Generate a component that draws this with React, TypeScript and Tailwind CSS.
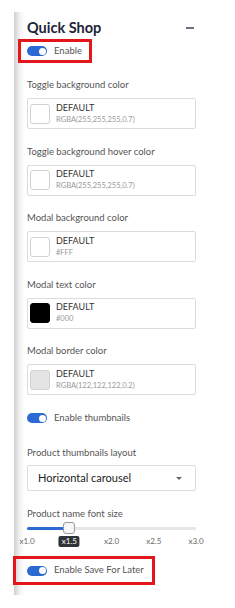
import React from 'react';

interface ColorFieldProps {
  label: string;
  value: string;
  swatch: string;
}

const Toggle: React.FC = () => (
  <span className="relative inline-block w-[20px] h-[10px] rounded-full bg-[#2c6ad3] shrink-0">
    <span className="absolute right-[1.5px] top-[1.5px] w-[7px] h-[7px] rounded-full bg-white"></span>
  </span>
);

const ColorField: React.FC<ColorFieldProps> = ({ label, value, swatch }) => (
  <div className="flex flex-col">
    <p className="text-[9.5px] leading-[14px] text-[#555] mb-[6px]">{label}</p>
    <div className="h-[31px] border border-[#dcdcdc] rounded-[2px] flex items-center pl-[2px] gap-[6px]">
      <span className={`w-[20px] h-[20px] rounded-[3px] border border-[#d2d2d2] ${swatch}`}></span>
      <div className="flex flex-col">
        <span className="text-[9px] leading-[12px] text-[#333]">DEFAULT</span>
        <span className="text-[7.5px] leading-[12px] text-[#999]">{value}</span>
      </div>
    </div>
  </div>
);

const App: React.FC = () => {
  const ticks = ['x1.0', 'x1.5', 'x2.0', 'x2.5', 'x3.0'];

  return (
    <div className="w-[235px] h-[608px] bg-white pl-[14px] pt-[12px] font-['Lato',sans-serif]">
      <div className="h-[583px] bg-[linear-gradient(to_right,#cfcfcf,#f4f4f4_6px,#ffffff_11px)] pl-[13px]">
        <div className="w-[169px] flex flex-col">
          {/* Header */}
          <div className="flex items-center justify-between mt-[6px] h-[20px]">
            <h1 className="text-[14.5px] font-bold text-[#1e2538] leading-[20px]">Quick Shop</h1>
            <span className="w-[8px] h-[1.5px] bg-[#6b7280] mr-[2px]"></span>
          </div>

          <div className="mt-[1px] -ml-[9px] w-[74px] h-[24px] border-[3px] border-[#e3161c] flex items-center gap-[7px] pl-[6px]">
            <Toggle />
            <span className="text-[9.5px] text-[#555]">Enable</span>
          </div>

          <div className="mt-[15px] flex flex-col gap-[15.5px]">
            <ColorField label="Toggle background color" value="RGBA(255,255,255,0.7)" swatch="bg-white" />
            <ColorField label="Toggle background hover color" value="RGBA(255,255,255,0.7)" swatch="bg-white" />
            <ColorField label="Modal background color" value="#FFF" swatch="bg-white" />
            <ColorField label="Modal text color" value="#000" swatch="bg-black border-black" />
            <ColorField label="Modal border color" value="RGBA(122,122,122,0.2)" swatch="bg-[#e4e4e4]" />
          </div>

          <div className="mt-[14px] h-[18px] flex items-center gap-[7px]">
            <Toggle />
            <span className="text-[9.5px] text-[#555]">Enable thumbnails</span>
          </div>

          <p className="mt-[19px] text-[9.5px] leading-[14px] text-[#555] mb-[5px]">Product thumbnails layout</p>
          <div className="h-[26px] border border-[#dcdcdc] rounded-[2px] flex items-center justify-between pl-[10px] pr-[13px]">
            <span className="text-[11px] text-[#222]">Horizontal carousel</span>
            <span className="w-0 h-0 border-l-[3px] border-r-[3px] border-t-[3px] border-l-transparent border-r-transparent border-t-[#666]"></span>
          </div>

          <p className="mt-[16px] text-[9.5px] leading-[14px] text-[#555]">Product name font size</p>
          <div className="relative mt-[1px] h-[12px] flex items-center">
            <div className="w-full h-[3px] rounded-full bg-[#e4e6ea]">
              <div className="w-[42px] h-full rounded-full bg-[#2c6ad3]"></div>
            </div>
            <span className="absolute left-[36px] top-0 w-[12px] h-[12px] rounded-[3px] bg-[#f7f7f7] border border-[#9a9a9a]"></span>
          </div>
          <div className="relative h-[13px] mt-[1px]">
            {ticks.map((t, i) => (
              <span
                key={t}
                className={
                  i === 1
                    ? 'absolute top-[1px] -translate-x-1/2 px-[3px] h-[11px] leading-[11px] rounded-[2px] bg-[#303338] text-white text-[8px]'
                    : 'absolute top-[1px] -translate-x-1/2 h-[11px] leading-[11px] text-[8px] text-[#666]'
                }
                style={{ left: `${i * 42.25}px` }}
              >
                {t}
              </span>
            ))}
          </div>

          <div className="mt-[8px] -ml-[14px] w-[142px] h-[29px] border-[3px] border-[#e3161c] flex items-center gap-[7px] pl-[11px]">
            <Toggle />
            <span className="text-[9.5px] text-[#555]">Enable Save For Later</span>
          </div>
        </div>
      </div>
    </div>
  );
};

export default App;
